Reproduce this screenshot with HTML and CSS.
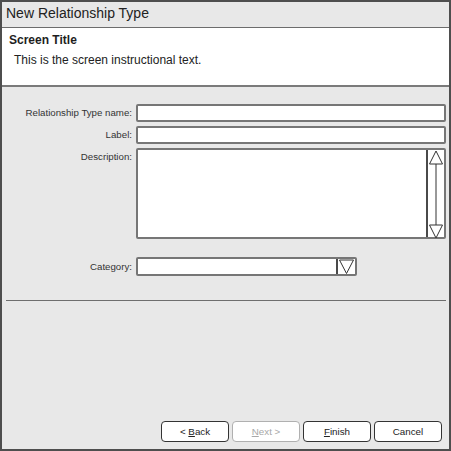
FILE: index.html
```html
<!DOCTYPE html>
<html>
<head>
<meta charset="utf-8">
<link rel="stylesheet" href="styles.css">
</head>
<body>
<div class="frame">
  <div class="titlebar">New Relationship Type</div>
  <div class="header">
    <div class="screen-title">Screen Title</div>
    <div class="instructions">This is the screen instructional text.</div>
  </div>
  <div class="form">
    <div class="fields">
      <label class="lbl">Relationship Type name:</label>
      <div class="input"></div>
      <label class="lbl">Label:</label>
      <div class="input"></div>
      <label class="lbl">Description:</label>
      <div class="textarea">
        <div class="ta-body"></div>
        <div class="scrollbar">
          <svg width="16" height="89" viewBox="0 0 16 89">
            <polygon points="8,1 1.5,14 14.5,14" fill="#fff" stroke="#333" stroke-width="1"/>
            <line x1="8" y1="14" x2="8" y2="75" stroke="#333" stroke-width="1"/>
            <polygon points="1.5,75 14.5,75 8,88" fill="#fff" stroke="#333" stroke-width="1"/>
          </svg>
        </div>
      </div>
      <label class="lbl lbl-cat">Category:</label>
      <div class="select">
        <div class="sel-body"></div>
        <div class="sel-btn">
          <svg width="17" height="17" viewBox="0 0 17 17">
            <polygon points="1.5,2 15.5,2 8.5,15.5" fill="#fff" stroke="#333" stroke-width="1"/>
          </svg>
        </div>
      </div>
    </div>
    <div class="separator"></div>
    <div class="buttons">
      <div class="btn">&lt; <u>B</u>ack</div>
      <div class="btn disabled"><u>N</u>ext &gt;</div>
      <div class="btn"><u>F</u>inish</div>
      <div class="btn">Cancel</div>
    </div>
  </div>
</div>
</body>
</html>
```
FILE: styles.css
```css
* { box-sizing: border-box; }
html, body { margin: 0; padding: 0; background: #e8e8e8; }
body { font-family: "Liberation Sans", Arial, sans-serif; color: #222; }

.frame {
  width: 451px;
  height: 451px;
  border: 2px solid #4e4e4e;
  background: #e8e8e8;
  display: flex;
  flex-direction: column;
}

.titlebar {
  height: 26px;
  border-bottom: 1px solid #6c6c6c;
  padding-left: 4px;
  font-size: 14px;
  line-height: 23px;
  color: #222;
  flex: none;
}

.header {
  height: 59px;
  background: #fff;
  border-bottom: 2px solid #7a7a7a;
  padding: 5px 0 0 7px;
  flex: none;
}
.screen-title {
  font-weight: bold;
  font-size: 12px;
  line-height: 14px;
  color: #1e1e1e;
}
.instructions {
  font-size: 12px;
  line-height: 14px;
  margin-top: 6px;
  padding-left: 5px;
  color: #222;
}

.form {
  flex: 1;
  display: flex;
  flex-direction: column;
  padding-top: 17px;
}

.fields {
  display: grid;
  grid-template-columns: 130px 1fr;
  column-gap: 4px;
  row-gap: 4px;
  padding-right: 3px;
}

.lbl {
  text-align: right;
  font-size: 9.7px;
  line-height: 18px;
  color: #333;
}
.lbl-cat { margin-top: 14px; line-height: 19px; }

.input {
  height: 18px;
  background: #fff;
  border: 2px solid #767676;
  border-radius: 2px;
}

.textarea {
  height: 91px;
  background: #fff;
  border: 2px solid #767676;
  border-radius: 2px;
  display: flex;
}
.ta-body { flex: 1; }
.scrollbar {
  width: 18px;
  border-left: 2px solid #4a4a4a;
  display: flex;
  align-items: flex-start;
  justify-content: center;
}
.scrollbar svg { display: block; }

.select {
  margin-top: 14px;
  width: 221px;
  height: 19px;
  background: #fff;
  border: 2px solid #767676;
  border-radius: 2px;
  display: flex;
}
.sel-body { flex: 1; }
.sel-btn {
  width: 19px;
  border-left: 2px solid #4a4a4a;
  display: flex;
  align-items: center;
  justify-content: center;
}
.sel-btn svg { display: block; }

.separator {
  margin: 24px 3px 0 4px;
  height: 1px;
  background: #6e6e6e;
}

.buttons {
  margin-top: auto;
  display: flex;
  justify-content: flex-end;
  gap: 3px;
  padding: 0 7px 7px 0;
}
.btn {
  width: 68px;
  height: 21px;
  background: #fff;
  border: 1px solid #333;
  border-radius: 4px;
  font-size: 9.8px;
  line-height: 19px;
  text-align: center;
  color: #222;
}
.btn.disabled {
  border-color: #b0b0b0;
  color: #a8a8a8;
}
```
